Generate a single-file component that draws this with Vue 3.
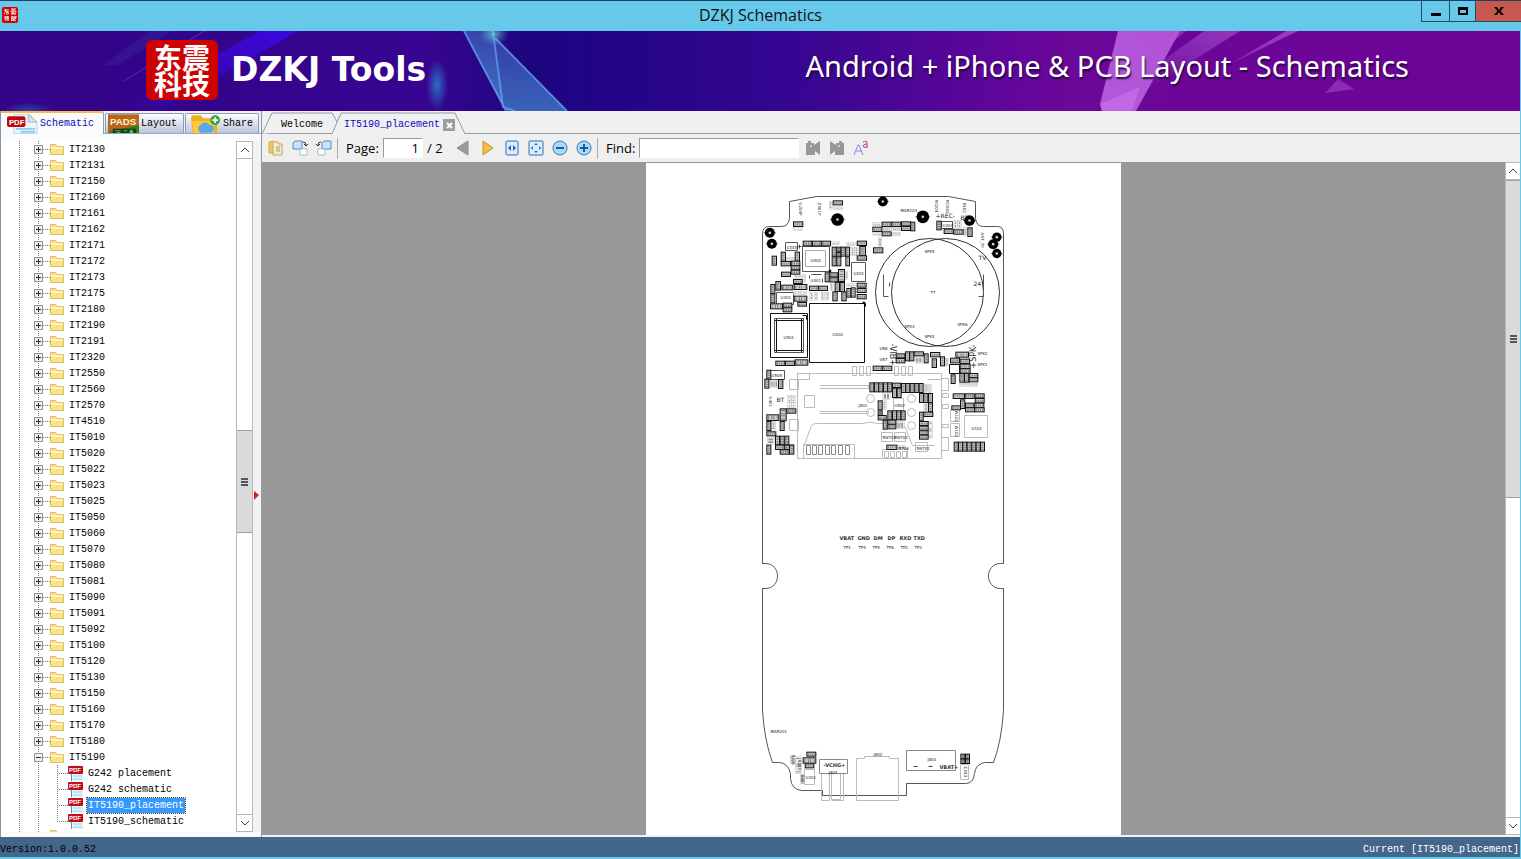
<script setup>
import { ref } from 'vue'

const folders = [
  'IT2130', 'IT2131', 'IT2150', 'IT2160', 'IT2161', 'IT2162', 'IT2171', 'IT2172', 'IT2173', 'IT2175',
  'IT2180', 'IT2190', 'IT2191', 'IT2320', 'IT2550', 'IT2560', 'IT2570', 'IT4510', 'IT5010', 'IT5020',
  'IT5022', 'IT5023', 'IT5025', 'IT5050', 'IT5060', 'IT5070', 'IT5080', 'IT5081', 'IT5090', 'IT5091',
  'IT5092', 'IT5100', 'IT5120', 'IT5130', 'IT5150', 'IT5160', 'IT5170', 'IT5180', 'IT5190'
]
const files = ['G242 placement', 'G242 schematic', 'IT5190_placement', 'IT5190_schematic']
const selected = ref('IT5190_placement')
const page = ref('1')
const query = ref('')

// Board parts are listed in thirds of a page unit: x, y, width, height.
const upper = [
  [132,112,28,14],[251,49,28,12],[398,113,27,13],[427,113,27,13],[456,112,27,12],[484,113,12,26],
  [370,128,27,13],[456,126,27,12],[398,142,27,12],[372,190,28,15],[562,110,13,26],[584,134,27,13],
  [613,136,28,13],[655,130,13,26],[161,170,26,14],[189,170,26,14],[217,170,26,14],[68,215,13,27],
  [95,203,13,27],[137,203,13,27],[95,231,28,13],[125,230,26,13],[125,244,26,12],[125,257,26,12],
  [96,263,27,13],[248,188,12,27],[262,188,12,14],[262,204,12,14],[275,188,12,27],[289,188,11,27],
  [248,217,12,27],[262,217,12,27],[289,217,11,27],[323,170,28,13],[331,186,17,27],[323,214,28,13],
  [227,265,12,27],[241,265,24,12],[241,280,24,12],[267,255,18,36],[257,294,13,27],[272,294,13,27],
  [250,322,13,27],[277,322,13,27],[292,312,12,26],[305,310,12,28],[323,296,27,12],[323,312,27,12],
  [323,330,27,13],[132,285,26,12],[134,300,38,15],[180,305,26,13],[208,305,26,13],[79,291,14,26],
  [64,300,12,27],[64,328,12,27],[97,302,33,14],[134,335,38,15],[145,354,26,11],[63,358,36,15],
  [101,356,26,12],[101,370,26,12],[79,530,27,13],[108,530,27,13],[137,526,38,16]
]
const middle = [
  [371,80,27,13],[400,80,27,13],[52,92,12,27],
  [46,119,12,27],[87,120,13,27],[440,43,26,12],[440,57,26,13],[468,37,12,27],[481,37,12,27],
  [494,37,28,12],[524,43,12,27],[543,39,28,13],[548,58,13,26],[573,52,12,27],[619,38,38,15],
  [603,56,27,14],[632,59,28,13],[632,74,30,13],[632,88,30,13],[605,106,12,26],[631,102,13,26],
  [645,102,13,26],[659,102,26,12],[659,115,26,12],[361,130,12,27],[375,130,12,27],[388,130,12,27],
  [402,130,12,27],[415,130,12,27],[429,131,25,13],[456,132,12,27],[469,132,12,27],[482,132,12,27],
  [496,132,12,27],[509,132,12,27],[429,146,12,28],[443,146,12,28],[510,162,12,27],[523,162,12,27],
  [537,162,12,27],[537,190,12,27],[386,184,12,27],[415,214,12,27],[429,214,12,27],[442,214,12,27],
  [455,214,12,27],[510,218,11,26],[523,218,27,13],[510,246,26,12],[510,260,26,12],[510,274,26,12],
  [510,287,26,12],[401,242,12,27],[415,242,24,12],[415,256,24,12],[386,214,12,13],[386,228,24,13],
  [412,317,30,13],[611,163,34,14],[647,163,27,14],[677,163,27,12],[677,177,27,13],[633,181,13,26],
  [607,199,26,12],[648,191,25,13],[676,191,27,13],[648,205,27,12],[676,205,28,12],[112,208,27,13],
  [92,208,18,36],[52,226,36,17],[52,246,12,27],[92,246,12,27],[52,277,27,12],[78,290,12,26],
  [92,290,12,26],[106,290,12,26],[78,317,26,13],[106,317,26,13],[52,317,12,27],[92,331,27,13],[120,317,13,27],
  [614,308,12,27],[627,308,12,27],[640,308,12,27],[653,308,12,27],[667,308,12,27],[680,308,12,27],[693,308,12,27]
]
const lower = [[172,158,27,12],[161,175,38,16],[167,193,26,12],[634,164,12,14],[648,164,12,14],[634,179,12,13],[648,179,12,13]]
const ghosts = [
  [400,160,22,20],[400,184,10,26],[440,246,24,22],[60,122,26,22],[115,168,10,36],[127,168,10,36],
  [66,246,12,26],[54,294,20,20],[525,134,10,25],[537,134,8,25],[497,51,22,20],[523,190,12,26],
  [537,246,12,50],[444,318,24,13],[587,56,10,24],[631,131,26,9],[659,131,26,9]
]
const upperGhosts = [
  [239,50,9,24],[252,66,28,9],[369,115,26,9],[398,128,27,11],[427,128,27,11],[370,144,26,9],[386,160,11,26],[426,143,28,10],
  [613,108,10,24],[625,108,10,24],[642,130,10,24],[246,172,24,9],[292,174,26,9],[304,188,10,26],
  [316,188,10,26],[110,218,24,9],[134,272,24,9],[160,270,8,24],[286,260,9,24],[292,297,25,9],
  [181,323,9,24],[195,323,9,24],[215,323,9,24],[229,323,9,24],[132,320,38,10],[132,130,27,8],[242,294,9,24]
]
const pins = [[400,51,12],[264,105,16],[520,97,16],[660,108,13],[61,145,12],[67,178,12],[742,158,11],[731,179,12],[742,207,11]]
const chipMarks = ([x, y, w, h]) => w > h
  ? `M${x + 5} ${y + 4}V${y + h - 3}M${x + w / 2 - 3} ${y + 4}V${y + h - 3}M${x + w / 2 + 3} ${y + 4}V${y + h - 3}M${x + w - 5} ${y + 4}V${y + h - 3}`
  : `M${x + 3} ${y + 5}H${x + w - 3}M${x + 3} ${y + h / 2 - 3}H${x + w - 3}M${x + 3} ${y + h / 2 + 3}H${x + w - 3}M${x + 3} ${y + h - 5}H${x + w - 3}`
const zones = [
  { shift: 'translate(750 185) scale(0.33333)', chips: upper, ghosts: upperGhosts },
  { shift: 'translate(750 340) scale(0.33333)', chips: middle, ghosts },
  { shift: 'translate(750 700) scale(0.33333)', chips: lower, ghosts: [[122,167,11,26],[137,172,20,50],[152,224,12,26]] }
]
const notes = [
  ['MAR203', 901, 212], ['SPK5', 925, 253], ['T7', 931, 294], ['SPK3', 905, 328], ['SPK4', 925, 338],
  ['SPK6', 958, 326], ['U402', 811, 262], ['U401', 811, 282], ['U201', 854, 275], ['U301', 781, 299],
  ['U202', 833, 336], ['U501', 784, 339], ['VB8', 880, 350], ['VB7', 880, 361], ['SPK2', 978, 355],
  ['SPK1', 978, 366], ['C445', 787, 249], ['U304', 943, 227], ['U505', 772, 377], ['J801', 859, 407],
  ['U502', 895, 407], ['U101', 972, 430], ['RN703', 883, 439], ['RN702', 895, 439], ['RN701', 917, 450],
  ['R706', 899, 450], ['MAR201', 771, 733], ['J802', 874, 756], ['J803', 928, 761], ['J804', 829, 774],
  ['U301', 806, 779], ['TP1', 844, 549], ['TP4', 859, 549], ['TP5', 873, 549], ['TP6', 887, 549],
  ['TP2', 901, 549], ['TP3', 915, 549]
]
const titles = [
  ['VBAT', 840, 540], ['GND', 858, 540], ['DM', 874, 540], ['DP', 888, 540], ['RXD', 900, 540], ['TXD', 914, 540],
  ['-VCHG+', 824, 767], ['VBAT+', 940, 769]
]
const plain = [['+REC-', 936, 218], ['BT', 777, 402], ['BT', 961, 220], ['TV', 979, 260], ['24', 974, 286]]
const upright = [
  ['U204P', 799, 203], ['Z301P', 818, 203], ['RE204', 935, 200], ['MDS02', 946, 200], ['K502', 963, 203],
  ['U401', 769, 397], ['ANT_TV', 981, 233], ['W101', 955, 411], ['W102', 955, 426], ['R376', 792, 755],
  ['R303', 798, 760], ['R301', 801, 775], ['C333', 964, 767]
]
</script>

<template>
  <div class="window">
    <header class="titlebar">
      <svg class="app-icon" viewBox="0 0 16 16" aria-hidden="true">
        <rect width="16" height="16" rx="2" fill="#c40808" />
        <path d="M2 3h5M4 2 3 5h4M5 4v4M2 7l1-1m3 0 1 1M9 2h5M9 4h5v1M9 4v1m2-3v4M9 6h5M9 7h5M2 10h5M4 9v5M2 12l2-1m1-1 1 1m1 1H5m1-3v5M9 10h2m-1-1v5l-1-1m0-1 2-1M11 10h4m-2-1v2m-2 0h3l-3 3m0-2 3 2" stroke="#ffe9e0" fill="none" />
      </svg>
      <h1 class="title">DZKJ Schematics</h1>
      <div class="controls">
        <button class="win min" aria-label="Minimize"><svg viewBox="0 0 12 12"><path d="M1 8h10v3H1z" /></svg></button>
        <button class="win max" aria-label="Maximize"><svg viewBox="0 0 12 12"><path d="M1 2h10v8H1zM3 5v3h6V5z" fill-rule="evenodd" /></svg></button>
        <button class="win close" aria-label="Close"><svg viewBox="0 0 12 12"><path d="M1 2h3l2 3 2-3h3L7.500 6l3.500 4H8L6 7l-2 3H1l3.500-4z" /></svg></button>
      </div>
    </header>

    <div class="banner">
      <svg class="art" viewBox="0 0 1520 80" preserveAspectRatio="none" aria-hidden="true">
        <defs>
          <linearGradient id="base"><stop offset="0" stop-color="#310486" /><stop offset=".28" stop-color="#370591" /><stop offset=".35" stop-color="#1c067f" /><stop offset=".39" stop-color="#210486" /><stop offset=".52" stop-color="#350691" /><stop offset=".66" stop-color="#60069b" /><stop offset=".7" stop-color="#6b0799" /><stop offset="1" stop-color="#6d0497" /></linearGradient>
          <linearGradient id="beam" x1="0" y1="1" x2="1" y2="0"><stop offset="0" stop-color="#3e08ff" stop-opacity="0" /><stop offset="1" stop-color="#3e08f4" stop-opacity=".8" /></linearGradient>
          <linearGradient id="shard" x2="0" y2="1"><stop offset="0" stop-color="#3d55b4" /><stop offset="1" stop-color="#438bd1" /></linearGradient>
          <linearGradient id="pink" x1="0" x2="1" y1="1" y2="0"><stop offset="0" stop-color="#bd67e6" /><stop offset="1" stop-color="#c05fe1" /></linearGradient>
          <linearGradient id="fade" x1="0" x2="1" y1="1" y2="0"><stop offset="0" stop-color="#b06ae0" stop-opacity="0" /><stop offset="1" stop-color="#a64acb" stop-opacity=".8" /></linearGradient>
          <radialGradient id="glow"><stop offset="0" stop-color="#2b85cc" stop-opacity=".8" /><stop offset="1" stop-color="#2b85cc" stop-opacity="0" /></radialGradient>
          <radialGradient id="spark"><stop offset="0" stop-color="#72e8df" /><stop offset="1" stop-color="#3fa9d8" stop-opacity="0" /></radialGradient>
        </defs>
        <rect width="1520" height="80" fill="url(#base)" />
        <path d="M260 0h38L160 80h-46z" fill="url(#beam)" />
        <path d="M150 0h22L118 34h-15z" fill="#3a4bb7" fill-opacity=".2" />
        <path d="M204 0l-80 50" stroke="#5a67d1" stroke-opacity=".5" />
        <ellipse cx="437" cy="54" rx="11" ry="26" fill="url(#glow)" />
        <ellipse cx="28" cy="80" rx="26" ry="9" fill="url(#glow)" fill-opacity=".6" />
        <path d="M464 0h29l11 77z" fill="url(#shard)" fill-opacity=".8" />
        <path d="M495 7l72 73h-60l-4-5z" fill="url(#shard)" fill-opacity=".7" />
        <path d="M464 0l42 80M493 0l10 76 12 4M495 7l72 73" fill="none" stroke="#609cec" stroke-opacity=".8" stroke-width="2" />
        <ellipse cx="494" cy="3" rx="15" ry="12" fill="url(#spark)" fill-opacity=".7" />
        <path d="M1118 0h62l-44 80h-34l-2-7z" fill="url(#pink)" fill-opacity=".85" />
        <path d="M1100 73l40-17-8 24h-30z" fill="#d07aef" fill-opacity=".5" />
        <path d="M1204 0h36L1145 60l20-32zM1286 0h12l-68 33z" fill="url(#fade)" />
        <path d="M1176 0h10l-22 18zM1338 48l16 10-29 4z" fill="#b05ad1" fill-opacity=".45" />
      </svg>
      <div class="logo" lang="zh-CN"><span>东震科技</span></div>
      <strong class="brand">DZKJ Tools</strong>
      <span class="tagline">Android + iPhone &amp; PCB Layout - Schematics</span>
    </div>

    <div class="body">
      <aside class="sidebar">
        <nav class="side-tabs">
          <button class="side-tab active">
            <svg class="tab-icon" viewBox="0 0 32 20" aria-hidden="true"><path d="M7 0h16l8 8v12H7z" fill="#eef6fd" stroke="#b9cfe2" /><path d="M22 0v8h9z" fill="#d9e2ea" stroke="#a7b4bf" /><path d="M9 15h20M14 18h15" stroke="#8fcdf0" stroke-width="2" /><rect y="2" width="19" height="11" rx="2" fill="#bd0712" /><text x="2" y="11" class="pdf big">PDF</text></svg>
            Schematic
          </button>
          <button class="side-tab">
            <svg class="tab-icon" viewBox="0 0 32 20" aria-hidden="true"><rect width="32" height="20" fill="#b9661c" /><path d="M0 18 32 11v9H0z" fill="#347a27" /><path d="M5 15h24v5H5z" fill="#173c18" /><path d="M7 17h6m3 0h4m3 0h3M9 19h4" stroke="#56bd49" /><circle cx="24" cy="18" r="2" fill="#4cb548" /><text x="2" y="11" class="pads">PADS</text></svg>
            Layout
          </button>
          <button class="side-tab">
            <svg class="tab-icon" viewBox="0 0 32 20" aria-hidden="true"><path d="M1 4q0-3 3-3h7l3 3h11q3 0 3 3v13H3z" fill="#edb021" /><path d="M2 7h23v13H4z" fill="#ffc83a" /><path d="M10 18a4 4 0 0 1 1-7 5 5 0 0 1 9 0 4 4 0 0 1 1 8H11z" fill="#57a9e8" /><circle cx="26" cy="6" r="5" fill="#28a644" /><path d="M26 3v6m-3-3h6" stroke="#fff" stroke-width="2" /></svg>
            Share
          </button>
        </nav>
        <div class="side-body">
          <ul class="tree">
            <li v-for="name in folders" :key="name" class="node">
              <button class="expander" :aria-label="'Toggle ' + name">
                <svg viewBox="0 0 9 9"><path d="M.5 .5h8v8h-8z" fill="#eee" stroke="#919191" /><path d="M2 4.500h5" stroke="#1c2c4c" /><path v-if="name !== 'IT5190'" d="M4.500 2v5" stroke="#1c2c4c" /></svg>
              </button>
              <span class="dash"></span>
              <svg class="folder" viewBox="0 0 14 13" aria-hidden="true"><path d="M.5 11.500v-10h5l2 2h6v8z" fill="#fbe38a" stroke="#e0bf5a" /><path d="M1 5h12" stroke="#fff3bb" stroke-width="2" /></svg>
              <button class="label">{{ name }}</button>
            </li>
            <li v-for="(name, i) in files" :key="name" class="node leaf" :class="{ last: i === 3 }">
              <span class="dash"></span>
              <svg class="pdf-icon" viewBox="0 0 16 16" aria-hidden="true"><path d="M3 0h8l4 4v12H3z" fill="#eaf6fd" /><path d="M3.500 9v7" stroke="#5f8fb5" /><path d="M5 11h9M5 14h9" stroke="#98cee9" /><rect y="1" width="15" height="8" rx="1" fill="#c30c19" /><text x="1" y="7" class="pdf">PDF</text></svg>
              <button class="label" :class="{ selected: selected === name }" @click="selected = name">{{ name }}</button>
            </li>
            <li class="node cut"><svg class="folder" viewBox="0 0 14 13" aria-hidden="true"><path d="M.5 12.500v-11h5l2 2h6v9z" fill="#f6dc80" stroke="#e0bf5a" /></svg></li>
          </ul>
          <div class="scroll">
            <button aria-label="Scroll tree up"><svg viewBox="0 0 10 10"><path d="M1 7l4-4 4 4" /></svg></button>
            <div class="track tree-track"><i class="thumb"><b></b><b></b><b></b></i></div>
            <button aria-label="Scroll tree down"><svg viewBox="0 0 10 10"><path d="M1 3l4 4 4-4" /></svg></button>
          </div>
          <div class="splitter"><svg viewBox="0 0 5 9"><path d="M0 0l5 4-5 5z" fill="#e01b1b" /></svg></div>
        </div>
      </aside>

      <main class="main">
        <nav class="doc-tabs">
          <button class="doc-tab first"><svg class="shape" viewBox="0 0 78 22" aria-hidden="true"><path d="M0 22 10 1h60l7 12" /></svg><span>Welcome</span></button>
          <button class="doc-tab current"><svg class="shape" viewBox="0 0 133 22" aria-hidden="true"><path d="M0 22 9 1h114l10 21" /></svg><span>IT5190_placement</span><svg class="x" viewBox="0 0 12 12"><rect width="12" height="12" fill="#9b9d9f" /><path d="M4 4l5 5m0-5L4 9" stroke="#fff" stroke-width="2" /></svg></button>
        </nav>
        <div class="toolbar">
          <button class="tool" aria-label="Open"><svg viewBox="0 0 16 16"><path d="M1 2l5-1v12H1z" fill="#f2c566" stroke="#dba94f" /><path d="M6 2h4v2h4v11H5V3" fill="#f8ebc0" stroke="#c7a562" /><path d="M8 7h4M8 9h4M8 11h4" stroke="#8d9cae" /></svg></button>
          <button class="tool" aria-label="Rotate right"><svg viewBox="0 0 16 16"><path d="M3 1h7v8H1V3z" fill="#cae2fa" stroke="#5d87b3" /><path d="M11 9h4v6H8v-5" fill="#fff" stroke="#b3b9be" /><path d="M11 2q3 0 3 3m-2-1 2 2 2-2" fill="none" stroke="#333" /></svg></button>
          <button class="tool" aria-label="Rotate left"><svg viewBox="0 0 16 16"><path d="M8 1h7v8H6V3z" fill="#cae2fa" stroke="#5d87b3" /><path d="M5 9H2v6h7v-5" fill="#fff" stroke="#b3b9be" /><path d="M5 2Q2 2 2 5M0 4l2 2 2-2" fill="none" stroke="#333" /></svg></button>
          <i class="sep"></i>
          <label class="page-label" for="page">Page:</label>
          <input id="page" v-model="page" class="page-input" />
          <span class="total">/ 2</span>
          <button class="tool prev" aria-label="Previous page"><svg viewBox="0 0 16 16"><path d="M13 1v14L2 8z" fill="#9c9c9c" stroke="#8d8d8d" /></svg></button>
          <button class="tool" aria-label="Next page"><svg viewBox="0 0 16 16"><path d="M3 1v14l10-7z" fill="#f3bd47" stroke="#c6912b" /></svg></button>
          <button class="tool" aria-label="Fit width"><svg viewBox="0 0 16 16"><rect x="2" y="1" width="12" height="14" rx="1" fill="#d7ebfd" stroke="#376eae" /><path d="M7 5v6L4 8zM9 5v6l3-3z" fill="#1a67ae" /></svg></button>
          <button class="tool" aria-label="Fit page"><svg viewBox="0 0 16 16"><rect x="1" y="1" width="14" height="14" rx="1" fill="#d7ebfd" stroke="#376eae" /><path d="M6 5l2-2 2 2zM6 11l2 2 2-2zM5 6 3 8l2 2zM11 6l2 2-2 2z" fill="#2e72b5" /></svg></button>
          <button class="tool" aria-label="Zoom out"><svg viewBox="0 0 16 16"><circle cx="8" cy="8" r="7" fill="#a9d9f8" stroke="#3979ad" /><path d="M4 8h8" stroke="#155b98" stroke-width="2" /></svg></button>
          <button class="tool" aria-label="Zoom in"><svg viewBox="0 0 16 16"><circle cx="8" cy="8" r="7" fill="#a9d9f8" stroke="#3979ad" /><path d="M4 8h8M8 4v8" stroke="#155b98" stroke-width="2" /></svg></button>
          <i class="sep"></i>
          <label class="find-label" for="find">Find:</label>
          <input id="find" v-model="query" class="find-input" />
          <button class="tool" aria-label="Find previous"><svg viewBox="0 0 16 16"><path d="M1 3h2V1h3v2h3v2l6-4v14l-5-4v4H1z" fill="#979797" /><path d="M5 5h2v2H5z" fill="#ccc" /></svg></button>
          <button class="tool" aria-label="Find next"><svg viewBox="0 0 16 16"><path d="M1 1l6 4V3h3V1h3v2h2v12H6v-4l-5 4z" fill="#979797" /><path d="M9 5h2v2H9z" fill="#ccc" /></svg></button>
          <button class="tool" aria-label="Match case"><svg viewBox="0 0 16 16"><path d="M1 15 5 5h1l4 10M3 11h6" fill="none" stroke="#9a7bef" /><path d="M10 2q4-2 4 1v5M14 4q-4 0-4 2t4 1" fill="none" stroke="#b6379a" /></svg></button>
        </div>

        <div class="viewer">
          <div class="canvas">
            <svg class="sheet" viewBox="646.5 163.5 475 672" role="img" aria-label="IT5190 component placement">
              <g fill="none" stroke="#555" stroke-width="1">
                <path d="M790 202 817 197H949L976 202V219Q977 227 984 227H998Q1004 227 1004 234V564H1001C985 564 985 589 1001 589H1004V711Q1002 742 994 763H985Q976 765 975 774Q974 784 966 784H907V796H823V791H802Q792 790 791 779V774Q789 764 780 763H773Q765 742 763 711V589H766C782 589 782 564 766 564H763V234Q763 227 770 227H782Q789 227 790 219Z" />
                <g stroke="#333"><circle cx="930" cy="293" r="54" /><circle cx="946" cy="293" r="54" /></g>
                <path d="M884 275V297H889M984 275V297H979M890 283V287" />
                <path d="M771 314H808V358H771ZM775 321H804M775 351H804M777 319V353M802 319V353M810 304H865V363H810ZM863 304H866V307M803 316H807V320" stroke="#111" />
                <path d="M775 319H804V353H775ZM803 247H830V272H803ZM852 263H866V282H852ZM777 305V293H794V305ZM786 243H798V251H786ZM800 245V249M798 247H802M812 275H822M810 279V276M823 279V283M942 222H953V229H942ZM771 371H785V380H771Z" />
                <path d="M806 251H826V267H806Z" stroke="#aaa" />
                <path d="M950 365H960V374H950Z" stroke="#111" />
              </g>
              <g fill="none" stroke="#bbb" stroke-width="1">
                <path d="M798 374H942V459H798ZM798 373V380H810V374M942 374V380H928M798 453V459H807M790 380H799V390H790ZM790 420H799V431H790ZM942 379H949V391H942ZM942 438H949V451H942ZM820 386H869V389H820M820 412H869V414H820M805 396H815V408H805ZM804 448L812 426Q813 424 818 424H863Q871 421 877 424H899Q907 426 908 434L913 446H935M804 459V445H855V459M883 459V450H908V459" />
                <circle cx="871" cy="399" r="4" /><circle cx="871" cy="413" r="4" /><circle cx="912" cy="399" r="4" /><circle cx="912" cy="413" r="4" /><circle cx="912" cy="426" r="4" />
                <path d="M894 399H904V411H894ZM882 433H893V442H882ZM895 433H906V442H895ZM916 443H928V452H916ZM951 410H960V422H951ZM951 424H960V437H951ZM965 416H988V438H965ZM943 394H949V398H943ZM943 405H949V409H943ZM943 425H949V428H943Z" />
                <path v-for="x in [807,813,819,826,832,839,846]" :key="x" :d="`M${x} 455V446H${x + 4}V455Z`" stroke="#888" />
                <path v-for="x in [853,860,867,895,902,909]" :key="'p' + x" :d="`M${x} 367H${x + 4}V376H${x}Z`" />
                <path v-for="x in [885,891,897,903]" :key="'q' + x" :d="`M${x} 452H${x + 4}V458H${x}Z`" />
                <path d="M822 774V801H830V774M832 774V800H841V774M844 774V801H832M857 801V759H865V757H890V759H899V801ZM961 765H969V780H961ZM805 770H815V785H805Z" />
                <path d="M820 760H848V774H820ZM907 751H956V771H907Z" stroke="#888" />
              </g>
              <g v-for="zone in zones" :key="zone.shift" :transform="zone.shift">
                <g v-for="(g, i) in zone.ghosts" :key="'g' + i"><rect :x="g[0]" :y="g[1]" :width="g[2]" :height="g[3]" fill="#eee" stroke="#aaa" stroke-width="1" /><path :d="chipMarks(g)" stroke="#666" stroke-width="2" /></g>
                <g v-for="(c, i) in zone.chips" :key="i"><rect :x="c[0]" :y="c[1]" :width="c[2]" :height="c[3]" fill="#ccc" stroke="#111" stroke-width="3" /><path :d="chipMarks(c)" stroke="#555" stroke-width="2" /></g>
              </g>
              <g transform="translate(750 185) scale(0.33333)">
                <g v-for="(p, i) in pins" :key="i"><path :d="`M${p[0] - p[2] - 6} ${p[1]}H${p[0] + p[2] + 6}`" stroke="#222" stroke-width="2" /><circle :cx="p[0]" :cy="p[1]" :r="p[2] + 3" fill="#000" /><circle :cx="p[0]" :cy="p[1]" r="4" fill="#ccc" /></g>
                <path d="M238 256h7v8h-7zM338 352h9v14" fill="#000" />
              </g>
              <g class="note"><text v-for="(n, i) in notes" :key="i" :x="n[1]" :y="n[2]">{{ n[0] }}</text></g>
              <g class="heading"><text v-for="n in titles" :key="n[0]" :x="n[1]" :y="n[2]">{{ n[0] }}</text></g>
              <g class="mark"><text v-for="(n, i) in plain" :key="i" :x="n[1]" :y="n[2]">{{ n[0] }}</text></g>
              <g class="note"><text v-for="(n, i) in upright" :key="i" :transform="`translate(${n[1]} ${n[2]}) rotate(90)`">{{ n[0] }}</text></g>
              <g class="port"><text transform="translate(890 344) rotate(90)">-VIB+</text><text transform="translate(976 369) rotate(-90)">+SPK-</text></g>
              <path d="M914 767H918M929 767H933" stroke="#444" />
            </svg>
          </div>
          <div class="scroll doc-scroll">
            <button aria-label="Scroll page up"><svg viewBox="0 0 10 10"><path d="M1 7l4-4 4 4" /></svg></button>
            <div class="track doc-track"><i class="thumb"><b></b><b></b><b></b></i></div>
            <button aria-label="Scroll page down"><svg viewBox="0 0 10 10"><path d="M1 3l4 4 4-4" /></svg></button>
          </div>
        </div>
      </main>
    </div>

    <footer class="status"><span>Version:1.0.0.52</span><span class="where">Current [IT5190_placement]</span></footer>
  </div>
</template>

<style>
body { margin: 0; }
</style>

<style scoped>
* { box-sizing: border-box; }
button { padding: 0; border: 0; background: none; font: inherit; color: inherit; }
svg { display: block; }
.window { height: 100vh; display: flex; flex-direction: column; overflow: hidden; background: #66c9e9; border-bottom: 2px solid #66c9e9; font: 10px/16px "Liberation Mono", monospace; color: #000; }
.titlebar { flex: none; height: 31px; border-top: 1px solid #174562; display: grid; grid-template-columns: 1fr auto 1fr; align-items: start; }
.app-icon { width: 16px; height: 16px; margin: 6px 0 0 2px; }
.title { margin: 0; font: 400 16px/28px "Open Sans", "Noto Sans", sans-serif; color: #111; }
.controls { display: flex; justify-content: flex-end; }
.win { height: 21px; display: grid; place-items: center; border: 1px solid #254c5c; border-width: 0 0 1px 1px; }
.win svg { width: 12px; height: 12px; }
.min { width: 28px; } .max { width: 26px; } .close { width: 46px; background: #c65850; }

.banner { position: relative; flex: none; height: 80px; margin-right: 1px; display: flex; align-items: center; padding: 0 111px 2px 146px; background: #390590; color: #fff; overflow: hidden; }
.art { position: absolute; inset: 0; width: 100%; height: 100%; }
.logo { position: relative; flex: none; width: 72px; height: 60px; border-radius: 6px; background: #cc0203; display: grid; place-items: center; font: 700 28px/26px "Noto Sans CJK SC", sans-serif; }
.logo span { width: 58px; text-align: center; word-break: break-all; }
.brand { position: relative; margin-left: 13px; font: 700 33px/40px "DejaVu Sans", sans-serif; white-space: nowrap; }
.tagline { position: relative; margin-left: auto; padding-bottom: 8px; font: 400 29px/36px "Noto Sans", sans-serif; text-shadow: 1px 2px 2px #210440; white-space: nowrap; }

.body { flex: 1; min-height: 0; display: flex; margin-right: 1px; background: #f0f0f0; }
.sidebar { flex: none; width: 261px; display: flex; flex-direction: column; border-left: 1px solid #8398a7; background: #fbfbfd; }
.side-tabs { height: 23px; display: flex; align-items: flex-end; gap: 1px; background: #f0f0f0; padding-right: 2px; border-bottom: 1px solid #9aa9bb; }
.side-tab { height: 20px; flex: 0 0 79px; display: flex; align-items: center; gap: 2px; padding-left: 2px; border: 1px solid #8a9db5; border-bottom: 0; border-radius: 2px 2px 0 0; background: linear-gradient(#fdfdff, #bcc4da); font-size: 10px; overflow: hidden; }
.side-tab:last-child { flex-basis: 74px; padding-left: 4px; }
.side-tab.active { height: 23px; flex-basis: 103px; padding-left: 6px; border: 0; border-top: 2px solid #ffb942; border-right: 1px solid #8a9db5; margin-bottom: -1px; background: #fbfbfd; color: #0909b5; }
.tab-icon { flex: none; width: 31px; height: 20px; }
.pdf { font: 700 6px "Liberation Sans", sans-serif; fill: #fff; }
.pdf.big { font-size: 8px; }
.pads { font: 700 10px "Liberation Sans", sans-serif; fill: #fff2d6; }
.side-body { flex: 1; min-height: 0; display: flex; padding: 7px 0 5px; }
.tree { flex: 1; min-width: 0; margin: 0; padding: 0; list-style: none; overflow: hidden; background: #fff; }
.node { height: 16px; display: flex; align-items: center; padding-left: 33px; background-image: repeating-linear-gradient(#777 0 1px, transparent 1px 2px), repeating-linear-gradient(#777 0 1px, transparent 1px 2px); background-size: 1px 16px, 1px 16px; background-position: 18px 0, 37px 0; background-repeat: no-repeat; }
.expander, .expander svg { width: 9px; height: 9px; }
.dash { width: 7px; height: 1px; background: repeating-linear-gradient(90deg, #777 0 1px, transparent 1px 2px); }
.folder { width: 14px; height: 13px; margin-right: 4px; }
.label { height: 15px; line-height: 15px; padding: 0 1px; }
.leaf { padding-left: 56px; background-image: repeating-linear-gradient(#777 0 1px, transparent 1px 2px), repeating-linear-gradient(#777 0 1px, transparent 1px 2px), repeating-linear-gradient(#777 0 1px, transparent 1px 2px); background-size: 1px 16px; background-position: 18px 0, 37px 0, 56px 0; }
.leaf.last { background-size: 1px 16px, 1px 16px, 1px 8px; }
.leaf .dash { width: 11px; }
.pdf-icon { width: 16px; height: 16px; margin-right: 3px; }
.selected { background: #3399ff; color: #fff; outline: 1px dotted #5b3a13; }
.cut { padding-left: 49px; align-items: flex-start; }
.scroll { flex: none; width: 17px; display: flex; flex-direction: column; border: 1px solid #b8b8b8; background: #fff; }
.scroll button { flex: none; height: 16px; display: grid; place-items: center; }
.scroll button svg { width: 10px; height: 10px; fill: none; stroke: #444; stroke-width: 1; }
.track { flex: 1; display: grid; border: 1px solid #b8b8b8; border-width: 1px 0; }
.tree-track { grid-template-rows: 271fr 104fr 281fr; }
.doc-track { grid-template-rows: 0 321fr 322fr; }
.thumb { grid-row: 2; display: flex; flex-direction: column; align-items: center; justify-content: center; gap: 1px; background: #dadada; border: 1px solid #a2a2a2; border-width: 1px 0; }
.thumb b { width: 7px; height: 2px; background: #555; }
.splitter { width: 8px; background: #f0f2f3; display: flex; align-items: center; padding: 17px 0 0 1px; }
.splitter svg { width: 5px; height: 9px; }

.main { flex: 1; min-width: 0; display: flex; flex-direction: column; border-left: 1px solid #8d9aa5; }
.doc-tabs { flex: none; height: 23px; display: flex; align-items: flex-end; border-bottom: 1px solid #969da3; background: #f0f0f0; }
.doc-tab { position: relative; height: 22px; margin-bottom: -1px; padding-top: 3px; display: flex; align-items: center; }
.doc-tab span { position: relative; }
.first { width: 78px; padding-left: 19px; }
.current { width: 133px; margin-left: -8px; padding-left: 12px; gap: 3px; color: #0909c5; }
.shape { position: absolute; inset: 0; width: 100%; height: 100%; fill: #f0f0f0; stroke: #8b9dab; }
.x { position: relative; width: 12px; height: 12px; }
.toolbar { flex: none; height: 28px; display: flex; align-items: center; padding-left: 2px; background: #efefef; font: 13px/20px "Open Sans", "Noto Sans", sans-serif; }
.tool { flex: none; width: 24px; height: 24px; display: grid; place-items: center; }
.tool svg { width: 16px; height: 16px; }
.prev { width: 26px; }
.sep { width: 1px; height: 21px; margin-left: 1px; background: #aaa; }
.page-label { width: 37px; margin-left: 8px; }
.find-label { width: 33px; margin-left: 8px; }
.toolbar input { height: 20px; padding: 0 3px; border: 1px solid #999; border-color: #999 #fff #fff #999; border-radius: 0; background: #fff; font: inherit; outline: 0; }
.toolbar .page-input { width: 40px; text-align: right; }
.total { width: 23px; margin-left: 4px; }
.toolbar .find-input { width: 160px; margin-right: 2px; }
.viewer { flex: 1; min-height: 0; display: flex; background: #989898; border-bottom: 2px solid #f2f4f4; }
.canvas { flex: 1; min-width: 0; display: flex; justify-content: center; padding-top: 1px; }
.sheet { height: 100%; aspect-ratio: 475 / 672; background: #fff; }
.doc-scroll { width: 15px; border-right: 0; }
.note { font: 4px "DejaVu Sans", sans-serif; fill: #222; }
.heading { font: 700 5px "DejaVu Sans", sans-serif; fill: #333; }
.mark { font: 6px "DejaVu Sans", sans-serif; fill: #222; }
.port { font: 8px "DejaVu Sans", sans-serif; fill: #333; }
.status { flex: none; height: 20px; display: flex; justify-content: space-between; align-items: flex-end; margin-right: 1px; padding-right: 1px; background: #43668b; line-height: 15px; }
.where { color: #fff; }
</style>
